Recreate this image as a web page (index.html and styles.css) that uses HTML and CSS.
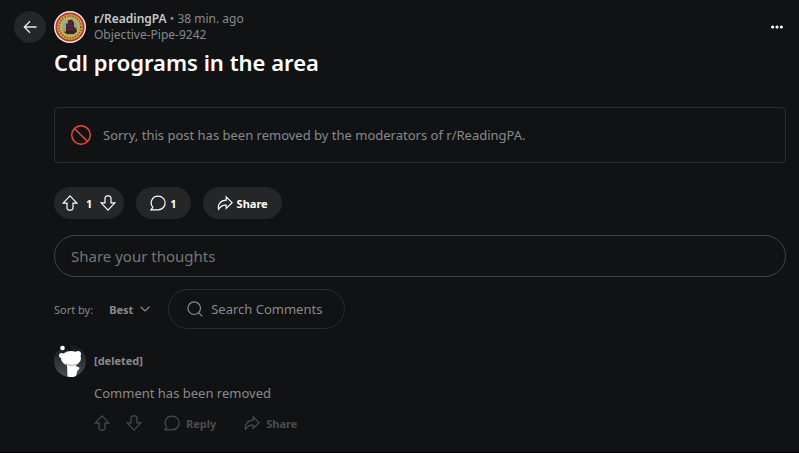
FILE: index.html
```html
<!DOCTYPE html>
<html lang="en">
<head>
<meta charset="UTF-8">
<meta name="viewport" content="width=device-width, initial-scale=1.0">
<title>Cdl programs in the area : r/ReadingPA</title>
<link rel="stylesheet" href="styles.css">
</head>
<body>
<!-- shared icons -->
<svg class="sprite" aria-hidden="true">
<symbol id="icon-up" viewBox="0 0 16 16"><path d="M8 .9 14.900 8.100H11v4.700a2.200 2.200 0 0 1-2.200 2.300H7.200A2.200 2.200 0 0 1 5 12.800V8.100H1.100Z"/></symbol>
<symbol id="icon-down" viewBox="0 0 16 16"><path d="M8 15.100 14.900 7.900H11V3.200A2.200 2.200 0 0 0 8.800.900H7.200A2.200 2.200 0 0 0 5 3.200V7.900H1.100Z"/></symbol>
<symbol id="icon-comment" viewBox="0 0 16 16"><path d="M8.300 1.100a6.800 6.800 0 1 1 0 13.700H1.100l1.700-2.500A6.800 6.800 0 0 1 8.300 1.100Z"/></symbol>
<symbol id="icon-share" viewBox="0 0 16 16"><path d="M9.200 1.900 15.200 7.700 9.200 13.400V10.200C5.800 9.900 3.500 11.300 1.600 14.300 .3 9.600 3.500 5.300 9.200 5.200Z"/></symbol>
</svg>

<header class="post-header">
<button class="back-button" aria-label="Back"><svg viewBox="0 0 16 16"><path d="M15.500 8H1.600M8 1.500 1.500 8 8 14.500"/></svg></button>
<svg class="avatar" viewBox="0 0 32 32" aria-hidden="true">
<circle cx="16" cy="16" r="16" fill="#f1e9df"/>
<circle cx="16" cy="16" r="13.700" fill="#c9a94c" stroke="#c5302f" stroke-width="1.800"/>
<circle cx="16" cy="16" r="11" fill="none" stroke="#6a6434" stroke-width="2" stroke-dasharray="1.200 1.500"/>
<circle cx="16" cy="16" r="8.700" fill="#85aaa0" stroke="#d9b545" stroke-width="1"/>
<path d="M8 18.500C12 16.500 20 17 24 18.500A8.500 8.500 0 0 1 8 18.500Z" fill="#b09b48"/>
<path d="M12 20V13l2-1V9.500l4-1 2 3.500v4l2 1 1 4-5 1.500Z" fill="#45202a"/>
<path d="M14 12h4M13 15h6M13 18h7" stroke="#7b3335" stroke-width=".7"/>
<path d="M10 21c4-2 9 0 12 0l-2 2h-7Z" fill="#242926"/>
</svg>
<div class="byline">
<div><a class="community" href="#">r/ReadingPA</a> <span>• 38 min. ago</span></div>
<a class="author" href="#">Objective-Pipe-9242</a>
</div>
<button class="more-button" aria-label="More options"><svg viewBox="0 0 16 16"><circle cx="3" cy="8" r="1.800"/><circle cx="8" cy="8" r="1.800"/><circle cx="13" cy="8" r="1.800"/></svg></button>
</header>

<main class="post">
<h1>Cdl programs in the area</h1>

<div class="notice">
<svg viewBox="0 0 20 20" aria-hidden="true"><circle cx="10" cy="10" r="9.300"/><path d="m3.500 3.500 13 13"/></svg>
<p>Sorry, this post has been removed by the moderators of r/ReadingPA.</p>
</div>

<div class="actions">
<div class="pill votes">
<button aria-label="Upvote"><svg class="icon"><use href="#icon-up"/></svg></button>
<span>1</span>
<button aria-label="Downvote"><svg class="icon"><use href="#icon-down"/></svg></button>
</div>
<button class="pill" aria-label="1 comment"><svg class="icon"><use href="#icon-comment"/></svg>1</button>
<button class="pill"><svg class="icon"><use href="#icon-share"/></svg>Share</button>
</div>

<input class="composer" type="text" placeholder="Share your thoughts" aria-label="Share your thoughts">

<div class="toolbar">
<label for="sort">Sort by:</label>
<div class="sort">
<select id="sort"><option>Best</option></select>
<svg viewBox="0 0 10 6" aria-hidden="true"><path d="m.6.700 4.400 4.300L9.400.700"/></svg>
</div>
<div class="search">
<svg class="icon" viewBox="0 0 16 16" aria-hidden="true"><circle cx="7.200" cy="7.200" r="6.300"/><path d="m11.800 11.800 3.600 3.600"/></svg>
<input type="text" placeholder="Search Comments" aria-label="Search Comments">
</div>
</div>

<article class="comment">
<svg class="avatar" viewBox="0 0 32 32" aria-hidden="true">
<defs><linearGradient id="shade" x2="0" y2="1"><stop offset="0" stop-color="#14181b"/><stop offset="1" stop-color="#454f56"/></linearGradient></defs>
<circle cx="16" cy="16" r="16" fill="url(#shade)"/>
<path d="M11 3.500 15 1.500 16 6" fill="none" stroke="#050607" stroke-width="1.500"/>
<circle cx="8.500" cy="3" r="2.300" fill="#fff"/>
<circle cx="7.500" cy="10.500" r="2.500" fill="#fff"/>
<circle cx="24" cy="9" r="3" fill="#fff"/>
<ellipse cx="17" cy="13.500" rx="10" ry="7.500" fill="#fff"/>
<path d="M13 19h9l.500 3c3-1 4 2 1 3.500L22 31q-4 1.800-8.500.500Z" fill="#fff"/>
<path d="M11 18.800q6 3 12 .700" fill="none" stroke="#aaa"/>
</svg>
<div class="comment-body">
<h2>[deleted]</h2>
<p>Comment has been removed</p>
<div class="comment-actions">
<button aria-label="Upvote" disabled><svg class="icon"><use href="#icon-up"/></svg></button>
<button aria-label="Downvote" disabled><svg class="icon"><use href="#icon-down"/></svg></button>
<button class="reply" disabled><svg class="icon"><use href="#icon-comment"/></svg>Reply</button>
<button class="share" disabled><svg class="icon"><use href="#icon-share"/></svg>Share</button>
</div>
</div>
</article>
</main>
</body>
</html>
```
FILE: styles.css
```css
*{box-sizing:border-box;}
body{margin:0;min-height:100vh;border-bottom:1px solid #000;background:#111214;color:#878a8c;font-family:'Noto Sans','Open Sans',sans-serif;font-size:13px;}
h1,h2,p{margin:0;}
a{color:inherit;text-decoration:none;}
button,input,select{font:inherit;color:inherit;background:none;border:none;padding:0;margin:0;}
button{cursor:pointer;display:flex;align-items:center;}
svg{fill:none;stroke:currentColor;flex-shrink:0;display:block;}
.sprite{display:none;}
.icon{width:16px;height:16px;stroke-width:1.2;}
.avatar{width:32px;height:32px;stroke:none;}

.post-header{display:flex;align-items:center;gap:8px;padding:11px 6px 0 14px;}
.back-button{width:32px;height:32px;border-radius:50%;background:#242628;color:#e8eaeb;justify-content:center;}
.back-button svg{width:14px;height:14px;stroke-width:1.5;}
.byline{flex:1;font-size:12px;line-height:16px;}
.community{color:#c5c9cb;font-weight:600;}
.more-button{width:32px;height:32px;justify-content:center;color:#fff;}
.more-button svg{width:14px;height:14px;fill:currentColor;stroke:none;}

.post{margin:0 13px 0 54px;}
h1{color:#fff;font-size:22px;font-weight:600;line-height:30px;margin-top:4px;}
.notice{display:flex;align-items:center;gap:12px;min-height:56px;margin-top:30px;padding:8px 16px;border:1px solid #292b2d;border-radius:4px;}
.notice svg{width:20px;height:20px;color:#f04a3e;stroke-width:1.4;}

.actions{display:flex;gap:12px;margin-top:24px;}
.pill{display:flex;align-items:center;gap:4px;height:32px;padding:0 14px;border-radius:16px;background:#242628;color:#fff;font-size:11px;font-weight:700;}
.votes{gap:8px;padding:0 8px;}

.composer{display:block;width:100%;height:42px;margin-top:16px;padding:0 16px;border:1px solid #424446;border-radius:21px;font-size:15px;}
input::placeholder{color:inherit;opacity:1;}
.composer::placeholder{color:#74777a;}

.toolbar{display:flex;align-items:center;margin-top:12px;font-size:11px;}
.sort{display:flex;align-items:center;margin:0 18px 0 16px;}
.sort select{appearance:none;font-weight:700;width:31px;cursor:pointer;}
.sort svg{width:10px;height:6px;stroke-width:1.2;}
.search{display:flex;align-items:center;gap:8px;width:177px;height:40px;padding:0 18px;border:1px solid #292b2d;border-radius:20px;font-size:13px;}
.search input{flex:1;min-width:0;}

.comment{display:flex;gap:8px;margin-top:16px;}
.comment-body{flex:1;}
h2{font-size:11px;font-weight:700;line-height:32px;}
.comment p{line-height:20px;padding-top:6px;}
.comment-actions{display:flex;align-items:center;gap:16px;margin-top:4px;height:32px;color:#4a4c4e;font-size:11px;font-weight:700;}
.comment-actions button{gap:6px;cursor:default;}
.reply{margin-left:6px;}
.share{margin-left:12px;}
```
